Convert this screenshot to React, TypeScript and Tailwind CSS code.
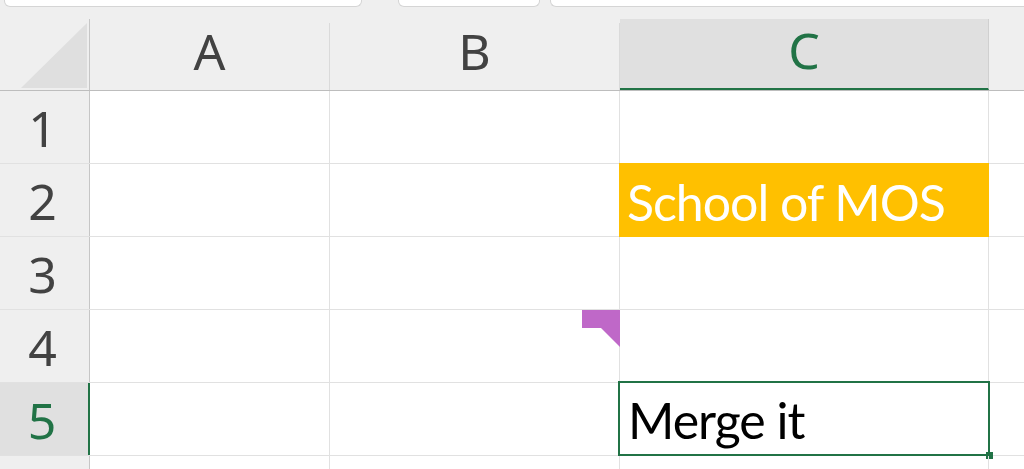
const cols = [
  { key: 'A', w: 'w-[240px]' },
  { key: 'B', w: 'w-[290px]' },
  { key: 'C', w: 'w-[369px]' },
];

const font = { fontFamily: '"Noto Sans", "Open Sans", sans-serif' };
const cellFont = { fontFamily: 'Lato, "Noto Sans", sans-serif' };

function TopStrip() {
  return (
    <div className="flex h-[19px] items-start gap-0 bg-[#efefef]">
      <div className="ml-[4px] h-[7px] w-[358px] rounded-b-[6px] border border-t-0 border-[#d5d5d5] bg-white" />
      <div className="ml-[36px] h-[7px] w-[142px] rounded-b-[6px] border border-t-0 border-[#d5d5d5] bg-white" />
      <div className="ml-[10px] h-[7px] flex-1 rounded-bl-[6px] border border-t-0 border-r-0 border-[#d5d5d5] bg-white" />
    </div>
  );
}

function ColumnHeader() {
  return (
    <div className="flex h-[72px] border-b border-[#bdbdbd] bg-[#efefef] text-[50px] leading-none text-[#424242]">
      <div className="flex h-full w-[90px] shrink-0 items-end border-r border-[#c6c6c6]">
        <svg width="89" height="71" viewBox="0 0 89 71" className="block">
          <polygon points="21,69 87,4 87,69" fill="#dfdfdf" />
        </svg>
      </div>
      {cols.map((c) => (
        <div
          key={c.key}
          className={
            c.key === 'C'
              ? `${c.w} flex shrink-0 items-center justify-center border-b-2 border-r border-[#217346] border-r-[#d0d0d0] bg-[#e0e0e0] pb-[8px] text-[#217346]`
              : `${c.w} mt-[4px] flex shrink-0 items-center justify-center border-r border-[#dadada] pb-[12px]`
          }
        >
          {c.key}
        </div>
      ))}
      <div className="mt-[4px] flex-1" />
    </div>
  );
}

function Row({ n }: { n: number }) {
  const active = n === 5;
  return (
    <div className="flex h-[73px] border-b border-[#e1e1e1]">
      <div
        className={
          active
            ? 'flex w-[90px] shrink-0 items-center justify-center border-r-2 border-[#217346] bg-[#e0e0e0] pt-[2px] pr-[4px] text-[50px] leading-none text-[#217346]'
            : 'flex w-[90px] shrink-0 items-center justify-center border-r border-[#c6c6c6] bg-[#efefef] pt-[2px] pr-[4px] text-[50px] leading-none text-[#424242]'
        }
      >
        {n <= 5 ? n : null}
      </div>
      <div className="w-[240px] shrink-0 border-r border-[#e1e1e1]" />
      <div className="relative w-[290px] shrink-0 border-r border-[#e1e1e1]">
        {n === 4 && (
          <svg width="38" height="38" viewBox="0 0 38 38" className="absolute right-[-1px] top-0">
            <polygon points="0,0 38,0 38,37 19,18 0,18" fill="#bf68c8" />
          </svg>
        )}
      </div>
      <div className="relative w-[369px] shrink-0 border-r border-[#e1e1e1]" style={cellFont}>
        {n === 2 && (
          <div className="absolute inset-[-1px] flex items-end bg-[#ffc000] pb-[10px] pl-[8px] text-[50px] leading-none tracking-[-0.02em] text-white">
            School of MOS
          </div>
        )}
        {n === 5 && (
          <div className="absolute inset-x-[-2px] top-[-2px] bottom-[-1px] flex items-end border-2 border-[#217346] pb-[9px] pl-[8px] text-[50px] leading-none tracking-[-0.02em] text-black">
            Merge it
            <span className="absolute bottom-[-5px] right-[-5px] h-[7px] w-[7px] bg-[#217346]" />
          </div>
        )}
      </div>
      <div className="flex-1" />
    </div>
  );
}

export default function App() {
  return (
    <div className="h-[469px] w-[1024px] overflow-hidden bg-white" style={font}>
      <TopStrip />
      <ColumnHeader />
      {[1, 2, 3, 4, 5, 6].map((n) => (
        <Row key={n} n={n} />
      ))}
    </div>
  );
}
